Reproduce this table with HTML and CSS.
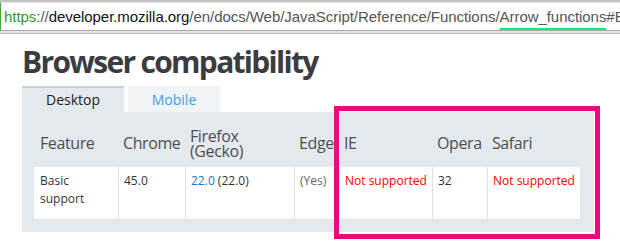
FILE: index.html
```html
<!DOCTYPE html>
<html lang="en">
<head>
<meta charset="utf-8">
<title>Browser compatibility</title>
<link rel="stylesheet" href="styles.css">
</head>
<body>
<div class="urlbar">
  <div class="url-field">
    <span class="url"><span class="scheme">https</span><span class="sep">://</span><span class="host">developer.mozilla.org</span><span class="path">/en/docs/Web/JavaScript/Reference/Functions/<span class="mark">Arrow_functions</span>#Browser_compatibility</span></span>
  </div>
</div>
<h1 class="title">Browser compatibility</h1>
<div class="tabs">
  <div class="tab tab-active">Desktop</div>
  <div class="tab tab-inactive">Mobile</div>
</div>
<div class="panel">
  <table class="compat">
    <thead>
      <tr>
        <th class="c1">Feature</th>
        <th class="c2">Chrome</th>
        <th class="c3">Firefox<br>(Gecko)</th>
        <th class="c4">Edge</th>
        <th class="c5">IE</th>
        <th class="c6">Opera</th>
        <th class="c7">Safari</th>
      </tr>
    </thead>
    <tbody>
      <tr>
        <td>Basic<br>support</td>
        <td>45.0</td>
        <td><span class="link">22.0</span> (22.0)</td>
        <td class="muted">(Yes)</td>
        <td class="no">Not supported</td>
        <td>32</td>
        <td class="no">Not supported</td>
      </tr>
    </tbody>
  </table>
</div>
<div class="highlight"></div>
</body>
</html>
```
FILE: styles.css
```css
* { box-sizing: border-box; }
html, body { margin: 0; padding: 0; background: #fff; }
body {
  width: 620px;
  height: 243px;
  overflow: hidden;
  position: relative;
  font-family: "Open Sans", "Liberation Sans", sans-serif;
}

.urlbar {
  height: 34px;
  border-top: 2px solid #c4c4c4;
  border-bottom: 1px solid #bcbcbc;
  background: #e4e4e4;
  padding-bottom: 2px;
}
.url-field {
  height: 29px;
  background: #fff;
  border-left: 1px solid #3fae3a;
  border-bottom: 1px solid #a8a8a8;
  border-top: 1px solid #e6e6e6;
  padding-left: 3px;
  white-space: nowrap;
  overflow: hidden;
  font-family: "Liberation Sans", Arial, sans-serif;
  font-size: 15px;
  line-height: 27px;
  letter-spacing: -0.05px;
}
.scheme { color: #2d9a22; }
.sep { color: #555; }
.host { color: #111; }
.path { color: #555; }
.mark {
  text-decoration: underline;
  text-decoration-color: #00f07c;
  text-decoration-thickness: 3px;
  text-underline-offset: 6px;
}

.title {
  margin: 8px 0 0 22px;
  font-size: 30px;
  line-height: 40px;
  font-weight: 700;
  color: #3b3c40;
  letter-spacing: -1.7px;
}

.tabs {
  display: flex;
  gap: 4px;
  margin: 4px 0 0 22px;
  height: 26px;
}
.tab {
  font-size: 14px;
  text-align: center;
  line-height: 24px;
  border-top: 2px solid transparent;
}
.tab-active {
  width: 102px;
  background: #e4e9ed;
  border-top-color: #c9d1d9;
  color: #1e1e1e;
}
.tab-inactive {
  width: 92px;
  background: #f0f4f7;
  border-top-color: #f0f4f7;
  color: #3a9fe2;
}

.panel {
  margin-left: 22px;
  width: 572px;
  height: 120px;
  background: #e4e9ed;
  padding: 0 14px 12px 12px;
}

.compat {
  border-collapse: separate;
  border-spacing: 0;
  table-layout: fixed;
  width: 546px;
}
.compat th {
  height: 55px;
  padding: 8px 0 0 6px;
  text-align: left;
  vertical-align: middle;
  font-weight: 400;
  font-size: 16px;
  letter-spacing: -0.4px;
  line-height: 15px;
  color: #4d4e53;
  white-space: nowrap;
  overflow: visible;
}
.compat th + th { padding-left: 5px; }
.c1 { width: 84px; }
.c2 { width: 67px; }
.c3 { width: 109px; }
.c4 { width: 45px; }
.c5 { width: 93px; }
.c6 { width: 55px; }
.c7 { width: 93px; }

.compat td {
  height: 53px;
  background: #fff;
  vertical-align: top;
  padding: 5px 0 0 6px;
  font-size: 12px;
  line-height: 18px;
  color: #333;
  border-bottom: 1px solid #dde3e9;
  white-space: nowrap;
}
.compat td + td {
  border-left: 1px solid #dde3e9;
  padding-left: 5px;
}
.compat .link { color: #1b76cf; }
.compat .muted { color: #666; }
.compat .no { color: #f00; }

.highlight {
  position: absolute;
  left: 334px;
  top: 106px;
  width: 266px;
  height: 133px;
  border: 5px solid #ef087d;
}
```
